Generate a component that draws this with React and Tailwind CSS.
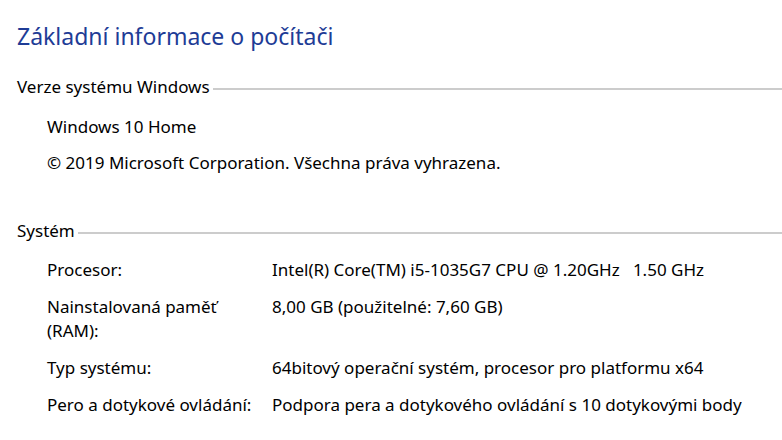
import React from 'react';

const rows = [
  { label: 'Procesor:', value: 'Intel(R) Core(TM) i5-1035G7 CPU @ 1.20GHz\u00a0\u00a0\u00a01.50 GHz' },
  { label: 'Nainstalovaná paměť (RAM):', value: '8,00 GB (použitelné: 7,60 GB)' },
  { label: 'Typ systému:', value: '64bitový operační systém, procesor pro platformu x64' },
  { label: 'Pero a dotykové ovládání:', value: 'Podpora pera a dotykového ovládání s 10 dotykovými body' },
];

const SectionHeader = ({ title }) => (
  <div className="flex items-center pl-[17px]">
    <span className="leading-6">{title}</span>
    <div className="flex-1 h-[2px] bg-[#cccccc] ml-[3px] mt-[3px]"></div>
  </div>
);

const App = () => {
  return (
    <div
      className="w-[782px] h-[440px] bg-white text-[17px] text-black overflow-hidden"
      style={{ fontFamily: '"Segoe UI", "Noto Sans", sans-serif' }}
    >
      <h1 className="pt-[20px] pl-[17px] text-[23px] leading-8 text-[#1e3c96]">
        Základní informace o počítači
      </h1>

      <div className="mt-[23px]">
        <SectionHeader title="Verze systému Windows" />
        <div className="pl-[47px] mt-[16px] flex flex-col gap-[12px]">
          <div className="leading-6">Windows 10 Home</div>
          <div className="leading-6">© 2019 Microsoft Corporation. Všechna práva vyhrazena.</div>
        </div>
      </div>

      <div className="mt-[44px]">
        <SectionHeader title="Systém" />
        <div className="pl-[47px] mt-[15px] flex flex-col gap-[13px]">
          {rows.map((row) => (
            <div key={row.label} className="flex leading-6">
              <div className="w-[225px] pr-4">{row.label}</div>
              <div className="whitespace-nowrap">{row.value}</div>
            </div>
          ))}
        </div>
      </div>
    </div>
  );
};

export default App;
